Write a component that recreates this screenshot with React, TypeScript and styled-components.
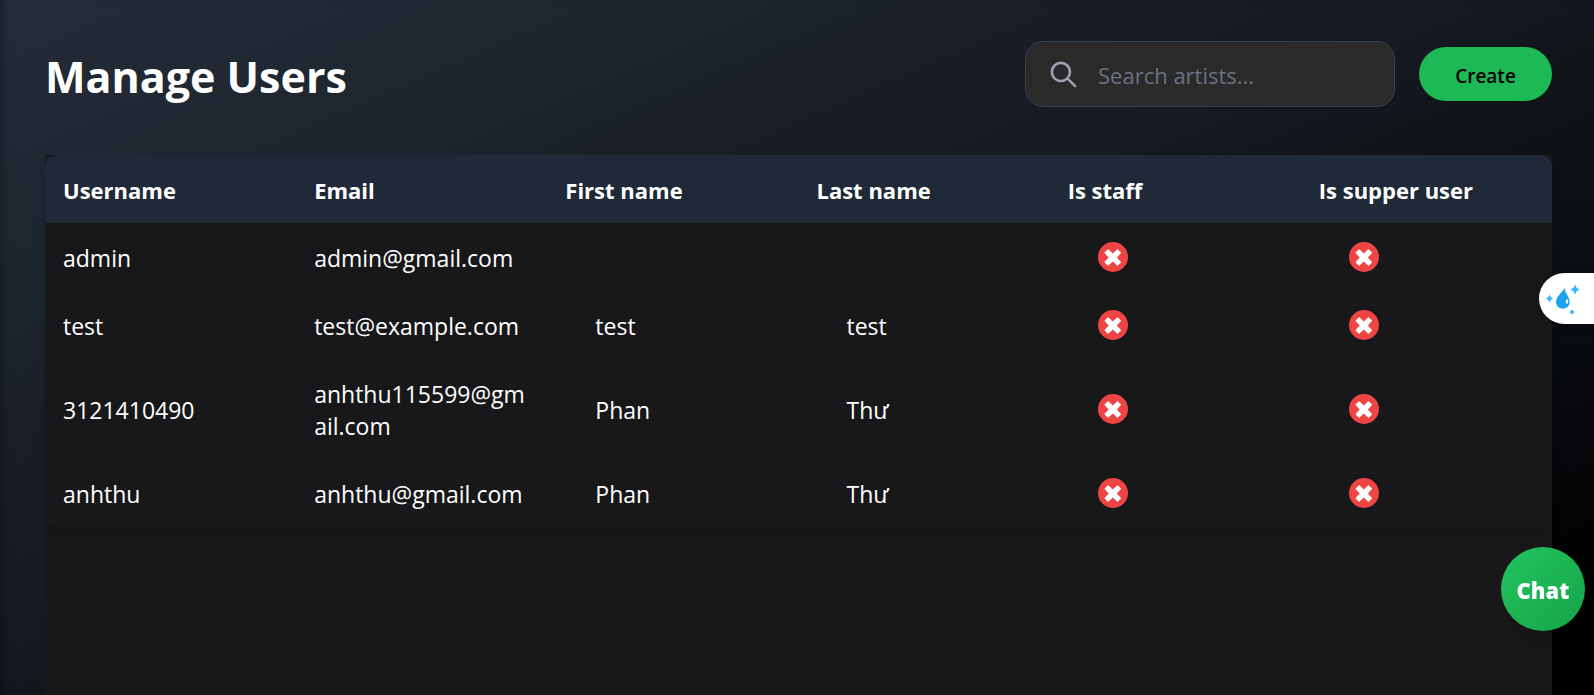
import React, { useState } from "react";
import styled, { createGlobalStyle } from "styled-components";

const GlobalStyle = createGlobalStyle`
  *, *::before, *::after { box-sizing: border-box; }
  html, body, #root { height: 100%; }
  body {
    margin: 0;
    background: #000;
    color: #fff;
    font-family: "Segoe UI", "Open Sans", "Noto Sans", sans-serif;
    font-size: 23px;
    line-height: 32px;
    overflow: hidden;
  }
`;

const Page = styled.main`
  display: flex;
  flex-direction: column;
  min-height: 100%;
  padding: 41px 42px 0 45px;
  background: linear-gradient(to bottom right, #252c38 0%, #1c242d 24%, #1a1f28 30%, #141922 47%, #101418 55%, #0a0d12 70%, #000 94%);
  box-shadow: inset 8px 0 8px -6px rgba(0, 0, 0, 0.3);
`;

const Header = styled.header`
  display: flex;
  align-items: center;
  justify-content: space-between;
  margin-bottom: 48px;
`;

const Title = styled.h1`
  margin: 0;
  padding-top: 6px;
  font-size: 43px;
  line-height: 54px;
  font-weight: 700;
`;

const Actions = styled.div`
  display: flex;
  align-items: center;
  gap: 24px;
`;

const SearchBox = styled.label`
  display: flex;
  align-items: center;
  gap: 19px;
  width: 370px;
  height: 66px;
  padding: 0 22px;
  border: 1px solid #374151;
  border-radius: 18px;
  background: #2a2a2a;
  color: #9ca3af;

  svg { flex: none; }
`;

const SearchInput = styled.input`
  flex: 1;
  min-width: 0;
  padding: 2px 0 0;
  border: 0;
  outline: 0;
  background: transparent;
  color: #fff;
  font: inherit;
  font-size: 22px;

  &::placeholder { color: #6b7280; opacity: 1; }
`;

const CreateButton = styled.button`
  min-width: 133px;
  height: 54px;
  padding: 3px 30px 0;
  border: 0;
  border-radius: 27px;
  background: #1db954;
  color: #000;
  font: inherit;
  font-size: 19px;
  font-weight: 600;
  cursor: pointer;
`;

const Panel = styled.section`
  flex: 1;
  background: #18181a;
`;

const Table = styled.table`
  width: 100%;
  table-layout: fixed;
  border-collapse: separate;
  border-spacing: 0;
  border-radius: 12px;
  overflow: hidden;
  box-shadow: 0 10px 15px -3px rgba(0, 0, 0, 0.1), 0 4px 6px -4px rgba(0, 0, 0, 0.1);
`;

const HeadCell = styled.th`
  padding: 19px 18px 17px;
  background: #1f2937;
  text-align: left;
  font-size: 22px;
  font-weight: 700;
  white-space: nowrap;
`;

const Cell = styled.td<{ $inset?: boolean }>`
  height: 68px;
  padding: 19px 18px 17px;
  padding-left: ${({ $inset }) => ($inset ? 48 : 18)}px;
  vertical-align: middle;
  overflow-wrap: anywhere;
`;

const StatusCell = styled(Cell)`
  padding-top: 18px;
  padding-bottom: 18px;
`;

const StatusBadge = styled.span`
  display: flex;
  align-items: center;
  justify-content: center;
  width: 30px;
  height: 30px;
  border-radius: 50%;
  background: #ef4444;
`;

const ChatButton = styled.button`
  position: fixed;
  right: 9px;
  bottom: 64px;
  width: 84px;
  height: 84px;
  padding: 2px 0 0;
  border: 0;
  border-radius: 50%;
  background: linear-gradient(to bottom right, #22c55e, #16a34a);
  box-shadow: 0 20px 25px -5px rgba(0, 0, 0, 0.1), 0 8px 10px -6px rgba(0, 0, 0, 0.1);
  color: #fff;
  font: inherit;
  font-size: 22px;
  font-weight: 800;
  cursor: pointer;
`;

const SideTab = styled.button`
  position: fixed;
  top: 273px;
  right: 0;
  width: 55px;
  height: 51px;
  padding: 0;
  border: 0;
  border-radius: 26px 0 0 26px;
  background: #fff;
  box-shadow: 0 0 12px rgba(0, 0, 0, 0.2);
  cursor: pointer;

  svg { display: block; }
`;

const users = [
  { username: "admin", email: "admin@gmail.com", first: "", last: "" },
  { username: "test", email: "test@example.com", first: "test", last: "test" },
  { username: "3121410490", email: "anhthu115599@gmail.com", first: "Phan", last: "Thư" },
  { username: "anhthu", email: "anhthu@gmail.com", first: "Phan", last: "Thư" },
];

const columns = ["Username", "Email", "First name", "Last name", "Is staff", "Is supper user"];

const SearchIcon = () => (
  <svg width="31" height="31" viewBox="0 0 24 24" fill="none" stroke="currentColor" strokeWidth="2" strokeLinecap="round" strokeLinejoin="round" aria-hidden="true">
    <path d="M21 21l-6-6m2-5a7 7 0 11-14 0 7 7 0 0114 0z" />
  </svg>
);

const No = () => (
  <StatusBadge role="img" aria-label="No">
    <svg width="18" height="18" viewBox="0 0 18 18" aria-hidden="true">
      <path
        d="M4 2.200L8.800 6.600L13.600 2.200L16.200 4.800L11.800 9.500L16.200 14.200L13.600 16.800L8.800 12.400L4 16.800L1.400 14.200L5.800 9.500L1.400 4.800Z"
        fill="#fff"
        stroke="#fff"
        strokeWidth="1.600"
        strokeLinejoin="round"
      />
    </svg>
  </StatusBadge>
);

const DropIcon = () => (
  <svg width="55" height="51" viewBox="0 0 55 51" aria-hidden="true">
    <path d="M25.800 15C25.400 20 30.700 23 30.700 29.700A6.900 6.900 0 0 1 17 29.700C17 23.500 22.500 20 25.800 15Z" fill="#1da1f2" />
    <ellipse cx="28" cy="28.500" rx="1.200" ry="2.200" fill="#fff" />
    <g fill="#38b6ff">
      <path d="M36 11Q36.800 15.700 41 16.500Q36.800 17.300 36 22Q35.200 17.300 31 16.500Q35.200 15.700 36 11Z" />
      <path d="M10.500 21Q11.200 24.800 14.500 25.500Q11.200 26.200 10.500 30Q9.800 26.200 6.500 25.500Q9.800 24.800 10.500 21Z" />
      <path d="M33 36Q33.700 38.300 36 39Q33.700 39.700 33 42Q32.300 39.700 30 39Q32.300 38.300 33 36Z" />
    </g>
  </svg>
);

export default function App() {
  const [query, setQuery] = useState("");
  const shown = users.filter((u) => u.username.includes(query.trim().toLowerCase()));

  return (
    <>
      <GlobalStyle />
      <Page>
        <Header>
          <Title>Manage Users</Title>
          <Actions>
            <SearchBox>
              <SearchIcon />
              <SearchInput
                type="text"
                aria-label="Search artists"
                placeholder="Search artists..."
                value={query}
                onChange={(e) => setQuery(e.target.value)}
              />
            </SearchBox>
            <CreateButton type="button">Create</CreateButton>
          </Actions>
        </Header>
        <Panel>
          <Table>
            <thead>
              <tr>
                {columns.map((c) => (
                  <HeadCell key={c} scope="col">{c}</HeadCell>
                ))}
              </tr>
            </thead>
            <tbody>
              {shown.map((u) => (
                <tr key={u.username}>
                  <Cell>{u.username}</Cell>
                  <Cell>{u.email}</Cell>
                  <Cell $inset>{u.first}</Cell>
                  <Cell $inset>{u.last}</Cell>
                  <StatusCell $inset><No /></StatusCell>
                  <StatusCell $inset><No /></StatusCell>
                </tr>
              ))}
            </tbody>
          </Table>
        </Panel>
      </Page>
      <SideTab type="button" aria-label="Open assistant"><DropIcon /></SideTab>
      <ChatButton type="button">Chat</ChatButton>
    </>
  );
}
